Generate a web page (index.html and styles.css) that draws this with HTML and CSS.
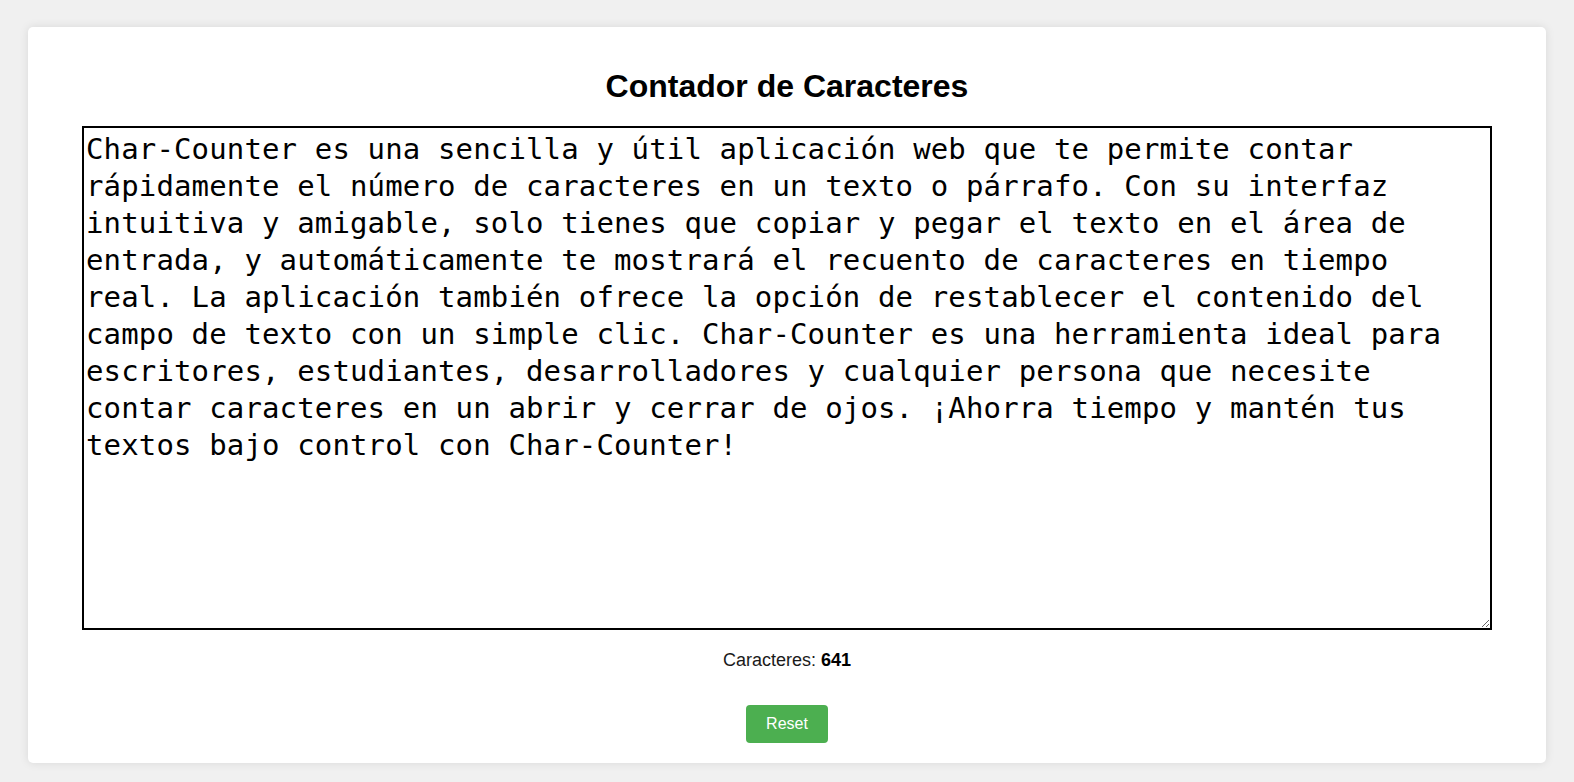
FILE: index.html
```html
<!DOCTYPE html>
<html lang="es">
<head>
<meta charset="utf-8">
<title>Contador de Caracteres</title>
<link rel="stylesheet" href="styles.css">
</head>
<body>
<main class="card">
  <h1 class="title">Contador de Caracteres</h1>
  <textarea class="input" id="text" spellcheck="false">Char-Counter es una sencilla y útil aplicación web que te permite contar rápidamente el número de caracteres en un texto o párrafo. Con su interfaz intuitiva y amigable, solo tienes que copiar y pegar el texto en el área de entrada, y automáticamente te mostrará el recuento de caracteres en tiempo real. La aplicación también ofrece la opción de restablecer el contenido del campo de texto con un simple clic. Char-Counter es una herramienta ideal para escritores, estudiantes, desarrolladores y cualquier persona que necesite contar caracteres en un abrir y cerrar de ojos. ¡Ahorra tiempo y mantén tus textos bajo control con Char-Counter!</textarea>
  <p class="count">Caracteres: <strong id="count">641</strong></p>
  <button class="reset" type="button">Reset</button>
</main>
<script src="script.js"></script>
</body>
</html>
```

FILE: styles.css
```css
html, body {
  margin: 0;
  height: 100%;
}

body {
  box-sizing: border-box;
  padding: 27px 28px 19px;
  background: #f0f0f0;
  font-family: "Liberation Sans", Arial, sans-serif;
  overflow: hidden;
}

.card {
  box-sizing: border-box;
  height: 736px;
  background: #fff;
  border-radius: 5px;
  box-shadow: 0 0 10px rgba(0, 0, 0, 0.1);
  padding: 20px;
  display: flex;
  flex-direction: column;
  align-items: center;
}

.title {
  margin: 21px 0 21px;
  font-size: 32px;
  font-weight: bold;
  line-height: 37px;
  color: #000;
}

.input {
  box-sizing: border-box;
  width: 1410px;
  height: 506px;
  margin: 0;
  border: 2px solid #000;
  padding: 3px 2px 0;
  font-family: "DejaVu Sans Mono", "Liberation Mono", monospace;
  font-size: 29px;
  letter-spacing: 0.14px;
  line-height: 37px;
  color: #000;
  background: #fff;
  outline: none;
  resize: both;
}

.count {
  margin: 20px 0 0;
  font-size: 18px;
  line-height: 20px;
  color: #1a1a1a;
}

.count strong {
  font-weight: bold;
  color: #000;
}

.reset {
  margin-top: 35px;
  padding: 10px 20px;
  border: none;
  border-radius: 4px;
  background: #4caf50;
  color: #fff;
  font-family: "Liberation Sans", Arial, sans-serif;
  font-size: 16px;
  line-height: 18px;
  cursor: pointer;
}
```

FILE: script.js
```js
const ta = document.getElementById('text');
const count = document.getElementById('count');
ta.addEventListener('input', () => { count.textContent = ta.value.length; });
document.querySelector('.reset').addEventListener('click', () => {
  ta.value = '';
  count.textContent = 0;
});
ta.focus();
ta.setSelectionRange(ta.value.length, ta.value.length);
```
